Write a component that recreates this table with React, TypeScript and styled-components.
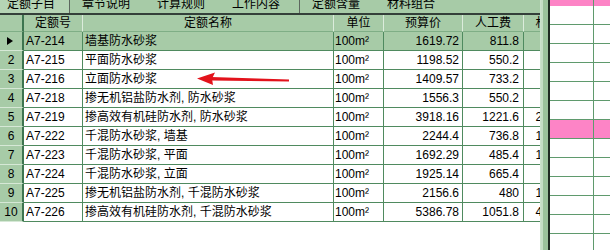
import React from "react";
import styled, { createGlobalStyle, css } from "styled-components";

const GREEN = "#a7cba7";
const GRID_LINE = "#4f8a5f";

const GlobalStyle = createGlobalStyle`
  html, body { margin: 0; padding: 0; background: #ffffff; }
  body {
    font-family: "Liberation Sans", "Noto Sans CJK SC", sans-serif;
    font-size: 12px;
    color: #000;
  }
`;

const Screen = styled.div`
  position: relative;
  display: flex;
  width: 610px;
  height: 250px;
  overflow: hidden;
  background: #fff;
`;

const LeftPanel = styled.div`
  display: flex;
  flex-direction: column;
  width: 540px;
  flex: none;
  overflow: hidden;
`;

const TabBar = styled.div`
  display: flex;
  height: 13px;
  background: ${GREEN};
  border-bottom: 2px solid #34403a;
  overflow: hidden;
`;

const Tab = styled.div<{ $w: number; $active?: boolean; $divider?: boolean; $pad: number }>`
  box-sizing: border-box;
  flex: none;
  display: flex;
  align-items: flex-end;
  width: ${(p) => p.$w}px;
  height: 13px;
  padding: 0 0 3px ${(p) => p.$pad}px;
  line-height: 12px;
  white-space: nowrap;
  overflow: hidden;
  background: ${(p) => (p.$active ? "#b5d4b5" : GREEN)};
  border-right: ${(p) => (p.$divider ? "1px solid #5d675f" : "none")};
`;

const Grid = styled.div`
  display: flex;
  flex-direction: column;
  width: max-content;
`;

const COLS = "24px 59px 251px 50px 79px 61px 60px";

const Row = styled.div`
  display: grid;
  grid-template-columns: ${COLS};
`;

const HeadCell = styled.div<{ $lead?: boolean }>`
  box-sizing: border-box;
  height: 17px;
  line-height: 16px;
  text-align: center;
  background: ${GREEN};
  border-bottom: 1px solid #7fae86;
  border-right: ${(p) => (p.$lead ? `2px solid #3d7550` : "1px solid #dcecdc")};
  white-space: nowrap;
  overflow: hidden;
`;

const Indicator = styled.div`
  box-sizing: border-box;
  height: 19px;
  line-height: 18px;
  text-align: center;
  background: ${GREEN};
  border-right: 2px solid #3d7550;
  border-bottom: 1px solid #d6e8d6;
  display: flex;
  align-items: center;
  justify-content: center;
`;

const Pointer = styled.span`
  display: block;
  width: 0;
  height: 0;
  margin-left: -2px;
  border-left: 6px solid #000;
  border-top: 4.5px solid transparent;
  border-bottom: 4.5px solid transparent;
`;

const Cell = styled.div<{ $num?: boolean; $sel?: boolean; $pad?: number }>`
  box-sizing: border-box;
  height: 19px;
  line-height: 18px;
  white-space: nowrap;
  overflow: hidden;
  background: ${(p) => (p.$sel ? GREEN : "#fff")};
  border-right: 1px solid ${GRID_LINE};
  border-bottom: 1px solid ${GRID_LINE};
  ${(p) =>
    p.$num
      ? css`
          text-align: right;
          padding-right: ${p.$pad ?? 3}px;
        `
      : css`
          text-align: left;
          padding-left: ${p.$pad ?? 3}px;
        `}
`;

const Splitter = styled.div`
  flex: none;
  width: 8px;
  background: linear-gradient(
    to right,
    #d2e6d2 0px,
    #c4dec4 1px,
    #c4dec4 3px,
    #9ac29a 3px,
    #9ac29a 8px
  );
`;

const Sheet = styled.div`
  flex: 1;
  display: flex;
  flex-direction: column;
  border-left: 2px solid #1d2a20;
  background: #fff;
`;

const SheetRow = styled.div<{ $pink?: boolean; $h: number; $line?: boolean }>`
  display: grid;
  grid-template-columns: 44px 1fr;
  flex: none;
  height: ${(p) => p.$h}px;
  background: ${(p) => (p.$pink ? "#fd84c6" : "#fff")};
  box-sizing: border-box;
  border-bottom: ${(p) => (p.$line ? `1px solid #5f9a6d` : "none")};
`;

const SheetCell = styled.div`
  border-right: 1px solid #5f9a6d;
`;

const Overlay = styled.svg`
  position: absolute;
  left: 0;
  top: 0;
  width: 610px;
  height: 250px;
  pointer-events: none;
`;

type Item = {
  code: string;
  name: string;
  price: string;
  labor: string;
  mat: string;
};

const rows: Item[] = [
  { code: "A7-214", name: "墙基防水砂浆", price: "1619.72", labor: "811.8", mat: "508.81" },
  { code: "A7-215", name: "平面防水砂浆", price: "1198.52", labor: "550.2", mat: "398.27" },
  { code: "A7-216", name: "立面防水砂浆", price: "1409.57", labor: "733.2", mat: "428.32" },
  { code: "A7-218", name: "掺无机铝盐防水剂, 防水砂浆", price: "1556.3", labor: "550.2", mat: "735.87" },
  { code: "A7-219", name: "掺高效有机硅防水剂, 防水砂浆", price: "3918.16", labor: "1221.6", mat: "2174.92" },
  { code: "A7-222", name: "千混防水砂浆, 墙基", price: "2244.4", labor: "736.8", mat: "1322.42" },
  { code: "A7-223", name: "千混防水砂浆, 平面", price: "1692.29", labor: "485.4", mat: "1025.71" },
  { code: "A7-224", name: "千混防水砂浆, 立面", price: "1925.14", labor: "665.4", mat: "983.56" },
  { code: "A7-225", name: "掺无机铝盐防水剂, 千混防水砂浆", price: "2156.6", labor: "480", mat: "1459.62" },
  { code: "A7-226", name: "掺高效有机硅防水剂, 千混防水砂浆", price: "5386.78", labor: "1051.8", mat: "4154.45" },
];

const tabs = [
  { label: "定额子目", w: 70, pad: 7, active: true, divider: true },
  { label: "章节说明", w: 75, pad: 12 },
  { label: "计算规则", w: 75, pad: 12 },
  { label: "工作内容", w: 80, pad: 12, divider: true },
  { label: "定额含量", w: 75, pad: 12 },
  { label: "材料组合", w: 75, pad: 12 },
];

export default function App() {
  return (
    <>
      <GlobalStyle />
      <Screen>
        <LeftPanel>
          <TabBar>
            {tabs.map((t) => (
              <Tab key={t.label} $w={t.w} $pad={t.pad} $active={t.active} $divider={t.divider}>
                {t.label}
              </Tab>
            ))}
          </TabBar>
          <Grid>
            <Row>
              <HeadCell $lead />
              <HeadCell>定额号</HeadCell>
              <HeadCell>定额名称</HeadCell>
              <HeadCell>单位</HeadCell>
              <HeadCell>预算价</HeadCell>
              <HeadCell>人工费</HeadCell>
              <HeadCell>材料费</HeadCell>
            </Row>
            {rows.map((r, i) => {
              const sel = i === 0;
              return (
                <Row key={r.code}>
                  <Indicator>{sel ? <Pointer /> : i + 1}</Indicator>
                  <Cell $sel={sel} $pad={2}>{r.code}</Cell>
                  <Cell $sel={sel} $pad={2}>{r.name}</Cell>
                  <Cell $sel={sel} $pad={1}>100m²</Cell>
                  <Cell $sel={sel} $num $pad={3}>{r.price}</Cell>
                  <Cell $sel={sel} $num $pad={4}>{r.labor}</Cell>
                  <Cell $sel={sel} $num $pad={4}>{r.mat}</Cell>
                </Row>
              );
            })}
          </Grid>
        </LeftPanel>
        <Splitter />
        <Sheet>
          <SheetRow $pink $h={6}>
            <SheetCell />
            <div />
          </SheetRow>
          {Array.from({ length: 13 }).map((_, i) => (
            <SheetRow key={i} $h={19} $line $pink={i === 6}>
              <SheetCell />
              <div />
            </SheetRow>
          ))}
        </Sheet>
        <Overlay viewBox="0 0 610 250">
          <polygon points="211,77 289,79.6 289,81.6 211,80.6" fill="#e3131c" />
          <polygon points="197,78.6 215,72.6 212,78.8 213,85" fill="#e3131c" />
        </Overlay>
      </Screen>
    </>
  );
}
